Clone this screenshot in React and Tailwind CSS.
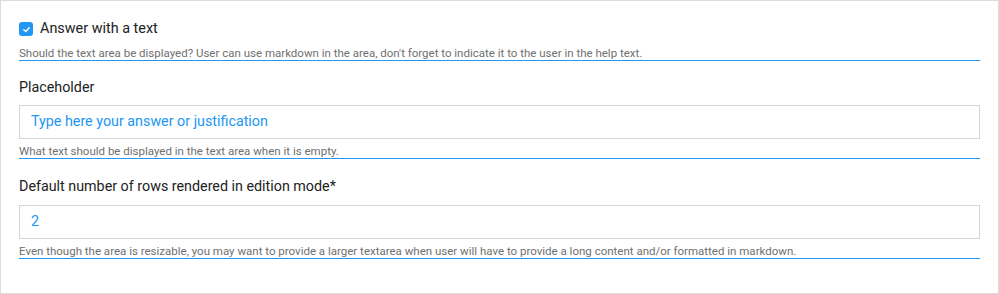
import React from "react";

const font = { fontFamily: "Roboto, 'Liberation Sans', sans-serif" };

function HelpText({ children, className = "" }) {
  return (
    <div className={className}>
      <p className="text-[11.5px] leading-[14px] text-[#707070]">{children}</p>
      <div className="h-px bg-[#2196f3]" />
    </div>
  );
}

function TextInput({ value }) {
  return (
    <div className="flex h-[34px] items-center border border-[#d3d3d8] bg-white px-[11px] text-[14.3px] text-[#2196f3]">
      {value}
    </div>
  );
}

export default function App() {
  return (
    <div
      className="flex h-[294px] w-[999px] flex-col border border-[#dcdcdc] bg-white px-[18px] pt-[19px]"
      style={font}
    >
      <div className="flex h-[18px] items-center gap-[7px]">
        <span className="flex h-[14px] w-[14px] items-center justify-center rounded-[3px] bg-[#2196f3]">
          <svg width="9" height="9" viewBox="0 0 10 10">
            <path
              d="M2 5.2 L4.2 7.2 L8 3"
              fill="none"
              stroke="white"
              strokeWidth="1.6"
              strokeLinecap="round"
              strokeLinejoin="round"
            />
          </svg>
        </span>
        <span className="text-[14.4px] text-[#222]">Answer with a text</span>
      </div>
      <HelpText className="mt-[8px]">
        Should the text area be displayed? User can use markdown in the area,
        don't forget to indicate it to the user in the help text.
      </HelpText>

      <div className="mt-[16px] text-[14.3px] leading-[20px] text-[#222]">
        Placeholder
      </div>
      <div className="mt-[8px]">
        <TextInput value="Type here your answer or justification" />
      </div>
      <HelpText className="mt-[5px]">
        What text should be displayed in the text area when it is empty.
      </HelpText>

      <div className="mt-[17px] text-[14.3px] leading-[20px] text-[#222]">
        Default number of rows rendered in edition mode*
      </div>
      <div className="mt-[9px]">
        <TextInput value="2" />
      </div>
      <HelpText className="mt-[5px]">
        Even though the area is resizable, you may want to provide a larger
        textarea when user will have to provide a long content and/or formatted
        in markdown.
      </HelpText>
    </div>
  );
}
